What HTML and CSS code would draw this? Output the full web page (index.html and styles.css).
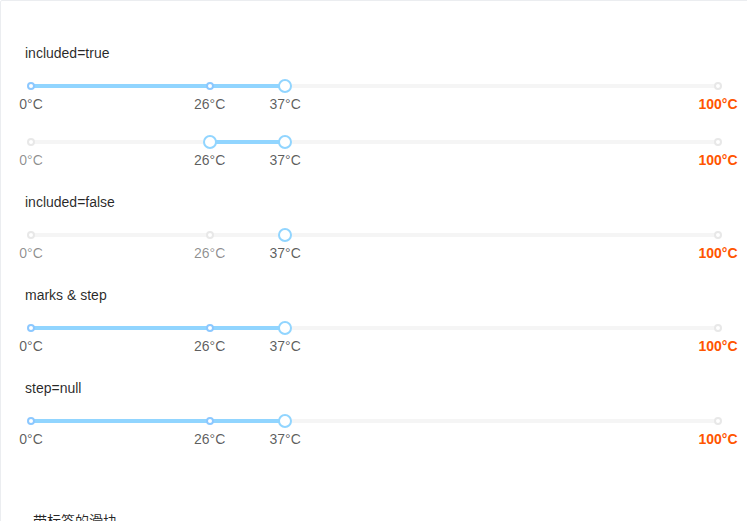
FILE: index.html
```html
<!DOCTYPE html>
<html lang="zh-CN">
  <head>
    <meta charset="UTF-8" />
    <meta name="viewport" content="width=device-width, initial-scale=1.0" />
    <title>Slider marks</title>
    <link rel="stylesheet" href="styles.css">
  </head>
  <body>
    <div class="code-box">
      <div class="code-box__demo">
        <h4>included=true</h4>
        <div class="slider">
          <div class="slider__rail"></div>
          <div class="slider__track" style="left: 0%; width: 37%"></div>
          <div class="slider__step">
            <span class="slider__dot slider__dot--active" style="left: 0%"></span>
            <span class="slider__dot slider__dot--active" style="left: 26%"></span>
            <span class="slider__dot slider__dot--active" style="left: 37%"></span>
            <span class="slider__dot" style="left: 100%"></span>
          </div>
          <div class="slider__handle" style="left: 37%"></div>
          <div class="slider__marks">
            <span class="slider__mark slider__mark--active" style="left: 0%">0°C</span>
            <span class="slider__mark slider__mark--active" style="left: 26%">26°C</span>
            <span class="slider__mark slider__mark--active" style="left: 37%">37°C</span>
            <span class="slider__mark slider__mark--hot" style="left: 100%"><strong>100°C</strong></span>
          </div>
        </div>

        <div class="slider">
          <div class="slider__rail"></div>
          <div class="slider__track" style="left: 26%; width: 11%"></div>
          <div class="slider__step">
            <span class="slider__dot" style="left: 0%"></span>
            <span class="slider__dot slider__dot--active" style="left: 26%"></span>
            <span class="slider__dot slider__dot--active" style="left: 37%"></span>
            <span class="slider__dot" style="left: 100%"></span>
          </div>
          <div class="slider__handle" style="left: 26%"></div>
          <div class="slider__handle" style="left: 37%"></div>
          <div class="slider__marks">
            <span class="slider__mark" style="left: 0%">0°C</span>
            <span class="slider__mark slider__mark--active" style="left: 26%">26°C</span>
            <span class="slider__mark slider__mark--active" style="left: 37%">37°C</span>
            <span class="slider__mark slider__mark--hot" style="left: 100%"><strong>100°C</strong></span>
          </div>
        </div>

        <h4>included=false</h4>
        <div class="slider">
          <div class="slider__rail"></div>
          <div class="slider__step">
            <span class="slider__dot" style="left: 0%"></span>
            <span class="slider__dot" style="left: 26%"></span>
            <span class="slider__dot slider__dot--active" style="left: 37%"></span>
            <span class="slider__dot" style="left: 100%"></span>
          </div>
          <div class="slider__handle" style="left: 37%"></div>
          <div class="slider__marks">
            <span class="slider__mark" style="left: 0%">0°C</span>
            <span class="slider__mark" style="left: 26%">26°C</span>
            <span class="slider__mark slider__mark--active" style="left: 37%">37°C</span>
            <span class="slider__mark slider__mark--hot" style="left: 100%"><strong>100°C</strong></span>
          </div>
        </div>

        <h4>marks &amp; step</h4>
        <div class="slider">
          <div class="slider__rail"></div>
          <div class="slider__track" style="left: 0%; width: 37%"></div>
          <div class="slider__step">
            <span class="slider__dot slider__dot--active" style="left: 0%"></span>
            <span class="slider__dot slider__dot--active" style="left: 26%"></span>
            <span class="slider__dot slider__dot--active" style="left: 37%"></span>
            <span class="slider__dot" style="left: 100%"></span>
          </div>
          <div class="slider__handle" style="left: 37%"></div>
          <div class="slider__marks">
            <span class="slider__mark slider__mark--active" style="left: 0%">0°C</span>
            <span class="slider__mark slider__mark--active" style="left: 26%">26°C</span>
            <span class="slider__mark slider__mark--active" style="left: 37%">37°C</span>
            <span class="slider__mark slider__mark--hot" style="left: 100%"><strong>100°C</strong></span>
          </div>
        </div>

        <h4>step=null</h4>
        <div class="slider">
          <div class="slider__rail"></div>
          <div class="slider__track" style="left: 0%; width: 37%"></div>
          <div class="slider__step">
            <span class="slider__dot slider__dot--active" style="left: 0%"></span>
            <span class="slider__dot slider__dot--active" style="left: 26%"></span>
            <span class="slider__dot slider__dot--active" style="left: 37%"></span>
            <span class="slider__dot" style="left: 100%"></span>
          </div>
          <div class="slider__handle" style="left: 37%"></div>
          <div class="slider__marks">
            <span class="slider__mark slider__mark--active" style="left: 0%">0°C</span>
            <span class="slider__mark slider__mark--active" style="left: 26%">26°C</span>
            <span class="slider__mark slider__mark--active" style="left: 37%">37°C</span>
            <span class="slider__mark slider__mark--hot" style="left: 100%"><strong>100°C</strong></span>
          </div>
        </div>
      </div>

      <div class="code-box__meta">
        <span class="code-box__title">带标签的滑块</span>
      </div>
    </div>
  </body>
</html>
```

FILE: styles.css
```css
html,
body {
  margin: 0;
  overflow: hidden;
}

body {
  font-family: "Liberation Sans", Arial, "Noto Sans CJK SC", sans-serif;
  font-size: 14px;
  line-height: 21px;
  color: rgba(0, 0, 0, 0.65);
  background: #fff;
}

.code-box {
  width: 747px;
  border: 1px solid #ebedf0;
  border-radius: 2px;
}

.code-box__demo {
  display: flex;
  flex-direction: column;
  padding: 42px 24px 50px;
}

.code-box__demo h4 {
  margin: 16px 0 0;
  font-size: 14px;
  font-weight: 400;
  line-height: 21px;
  color: rgba(0, 0, 0, 0.85);
}

.code-box__demo h4:first-child {
  margin-top: 0;
}

.slider {
  position: relative;
  height: 12px;
  margin: 16px 6px 28px;
}

.slider__rail,
.slider__track {
  position: absolute;
  top: 4px;
  height: 4px;
  border-radius: 2px;
}

.slider__rail {
  left: 0;
  width: 100%;
  background-color: #f5f5f5;
}

.slider__track {
  background-color: #91d5ff;
}

.slider__step {
  position: absolute;
  top: 4px;
  left: 0;
  width: 100%;
  height: 4px;
}

.slider__dot {
  position: absolute;
  top: -2px;
  width: 8px;
  height: 8px;
  margin-left: -4px;
  box-sizing: border-box;
  border: 2px solid #e8e8e8;
  border-radius: 50%;
  background-color: #fff;
}

.slider__dot--active {
  border-color: #8cc8ff;
}

.slider__handle {
  position: absolute;
  top: -1px;
  width: 14px;
  height: 14px;
  margin-left: -7px;
  box-sizing: border-box;
  border: 2px solid #91d5ff;
  border-radius: 50%;
  background-color: #fff;
}

.slider__marks {
  position: absolute;
  top: 14px;
  left: 0;
  width: 100%;
}

.slider__mark {
  position: absolute;
  transform: translateX(-50%);
  white-space: nowrap;
  color: rgba(0, 0, 0, 0.45);
}

.slider__mark--active {
  color: rgba(0, 0, 0, 0.65);
}

.slider__mark--hot {
  color: #f50;
}

.code-box__meta {
  padding: 6px 32px 20px;
}

.code-box__title {
  font-family: "Liberation Sans", "Noto Sans CJK SC", sans-serif;
  color: rgba(0, 0, 0, 0.85);
}
```
